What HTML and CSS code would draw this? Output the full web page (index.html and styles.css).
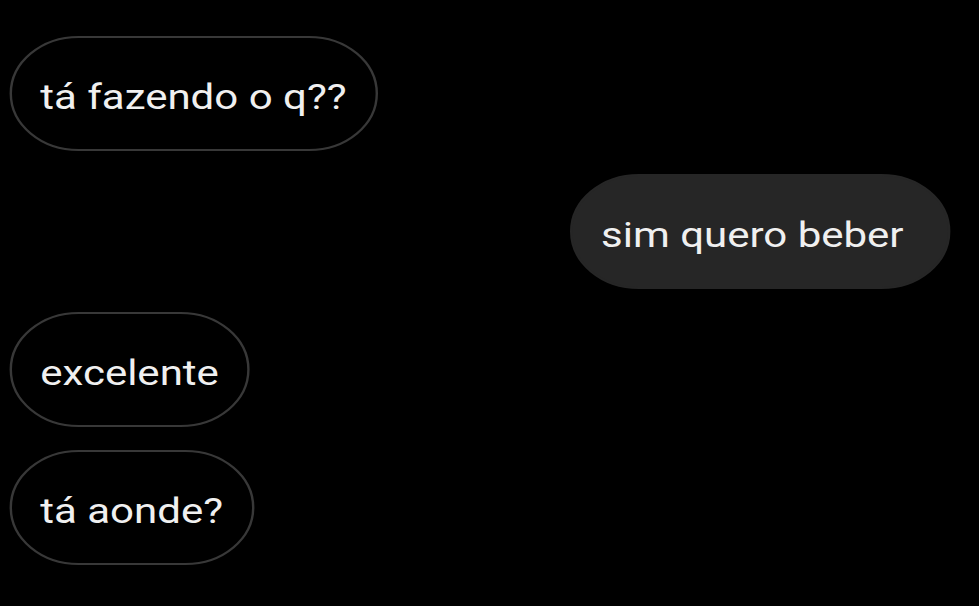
FILE: index.html
```html
<!DOCTYPE html>
<html lang="pt">
<head>
<meta charset="utf-8">
<link rel="stylesheet" href="styles.css">
</head>
<body>
<div class="chat">
  <div class="msg in">tá fazendo o q??</div>
  <div class="msg out">sim quero beber</div>
  <div class="msg in">excelente</div>
  <div class="msg in">tá aonde?</div>
</div>
</body>
</html>
```
FILE: styles.css
```css
html, body {
  margin: 0;
  padding: 0;
  background: #000;
  width: 979px;
  height: 606px;
  overflow: hidden;
}
.chat {
  box-sizing: border-box;
  width: 816px;
  display: flex;
  flex-direction: column;
  align-items: flex-start;
  gap: 23px;
  padding: 36px 24px 0 7.5px;
  font-family: Roboto, "Liberation Sans", sans-serif;
  transform: scaleX(1.2);
  transform-origin: 0 0;
}
.msg {
  box-sizing: border-box;
  height: 115px;
  display: flex;
  align-items: center;
  padding: 7px 24px 0;
  border-radius: 58px;
  font-size: 35px;
  color: #f0f0f0;
  white-space: nowrap;
}
.in {
  border: 2px solid #383838;
}
.out {
  align-self: flex-end;
  background: #262626;
  border: 2px solid #262626;
  padding-left: 24px;
  padding-right: 37px;
}
```
